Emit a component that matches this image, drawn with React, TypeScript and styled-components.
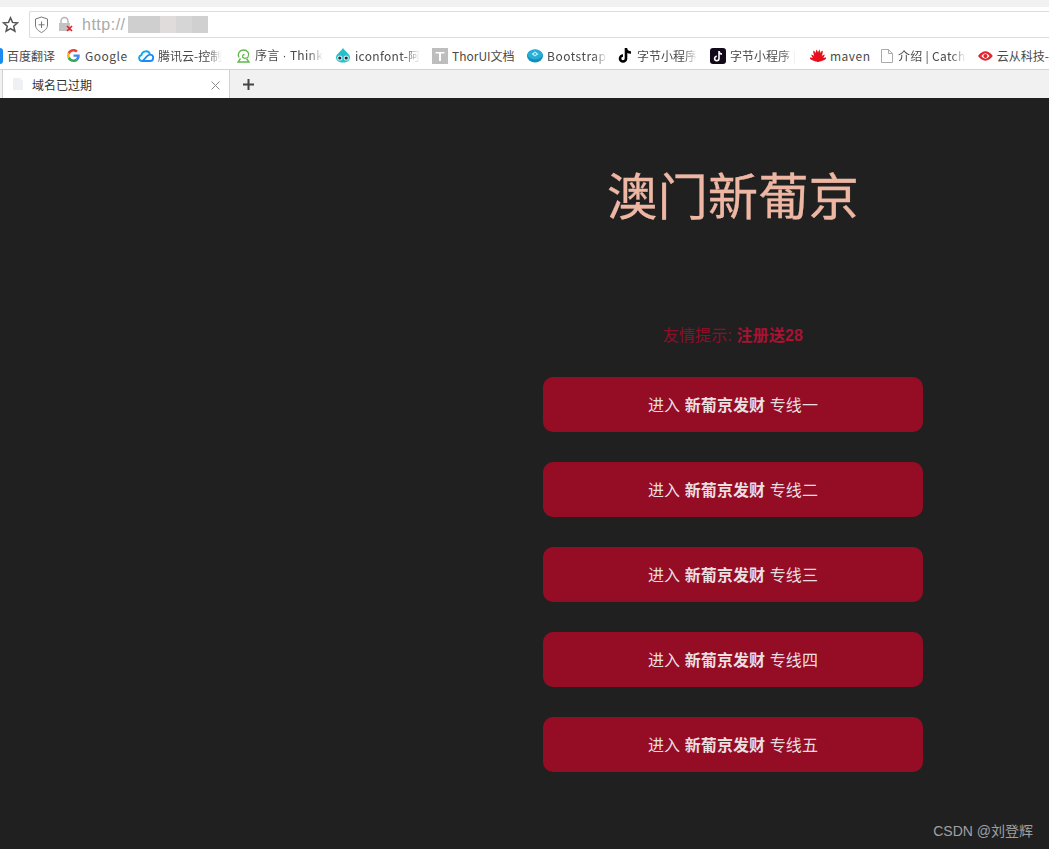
import styled, { createGlobalStyle } from 'styled-components';

const FONT = '"Liberation Sans", "Noto Sans CJK SC", sans-serif';

const GlobalStyle = createGlobalStyle`
  html, body {
    margin: 0;
    padding: 0;
    background: #202021;
  }
  body {
    font-family: ${FONT};
  }
`;

const Screen = styled.div`
  width: 1049px;
  height: 849px;
  overflow: hidden;
  display: flex;
  flex-direction: column;
  position: relative;
`;

/* browser chrome */
const TopStrip = styled.div`
  height: 7px;
  background: #f1f1f1;
`;

const Toolbar = styled.div`
  height: 31px;
  background: #fff;
  display: flex;
  align-items: flex-end;
  padding-left: 2px;
  box-sizing: border-box;
`;

const StarIcon = styled.svg`
  flex: none;
  margin: 0 10px 5px 0;
`;

const AddressBar = styled.div`
  flex: 1;
  height: 27px;
  border: 1px solid #dcdcdc;
  border-right: none;
  border-radius: 2px 0 0 2px;
  display: flex;
  align-items: center;
  padding-left: 4px;
  box-sizing: border-box;
`;

const LockIcon = styled.svg`
  margin-left: 8px;
`;

const UrlText = styled.span`
  font-size: 16px;
  color: #aaa;
  margin-left: 7px;
  letter-spacing: 0.5px;
`;

const Mask = styled.div`
  display: flex;
  height: 17px;
  margin-left: 2px;
`;

const MaskCell = styled.div<{ $w: number; $c: string }>`
  width: ${p => p.$w}px;
  background: ${p => p.$c};
`;

const Bookmarks = styled.div`
  height: 32px;
  background: #fff;
  border-bottom: 1px solid #d2d2d2;
  padding-top: 4px;
  box-sizing: border-box;
  display: flex;
  align-items: center;
  overflow: hidden;
`;

const Bookmark = styled.div<{ $w: number; $flush?: boolean }>`
  width: ${p => p.$w}px;
  flex: none;
  display: flex;
  align-items: center;
  gap: 4px;
  padding-left: ${p => (p.$flush ? 0 : 2)}px;
  box-sizing: border-box;
`;

const BookmarkLabel = styled.span<{ $fade?: boolean; $sp?: number }>`
  font-family: "Noto Sans CJK SC", "Liberation Sans", sans-serif;
  font-size: 12px;
  line-height: 16px;
  color: #4a4a4a;
  white-space: nowrap;
  letter-spacing: ${p => p.$sp ?? 0}px;
  ${p => p.$fade && `
    mask-image: linear-gradient(to right, #000 78%, transparent);
  `}
`;

const NarrowDot = styled.span`
  font-family: "Liberation Sans", sans-serif;
`;

const BlueEdge = styled.div`
  width: 3px;
  height: 16px;
  background: #1a8cf0;
  border-radius: 0 3px 3px 0;
  flex: none;
`;

const TabStrip = styled.div`
  height: 28px;
  background: #f1f1f1;
  display: flex;
  align-items: flex-end;
  padding-left: 2px;
  box-sizing: border-box;
`;

const Tab = styled.div`
  width: 228px;
  height: 28px;
  background: #fff;
  border: 1px solid #d2d2d2;
  border-top: none;
  border-bottom: none;
  display: flex;
  align-items: center;
  padding-left: 10px;
  gap: 9px;
  box-sizing: border-box;
`;

const TabTitle = styled.span`
  flex: 1;
  font-family: "Noto Sans CJK SC", sans-serif;
  font-size: 12px;
  color: #333;
`;

const TabClose = styled.svg`
  margin-right: 9px;
  margin-top: 2px;
`;

const NewTab = styled.svg`
  margin: 0 0 8px 13px;
`;

/* page */
const Page = styled.main`
  flex: 1;
  background: #202021;
  display: flex;
  justify-content: flex-end;
  padding-right: 126px;
`;

const Column = styled.div`
  width: 380px;
  display: flex;
  flex-direction: column;
  align-items: center;
`;

const Title = styled.h1`
  margin: 69px 0 0;
  font-size: 50.4px;
  line-height: 62px;
  font-weight: 400;
  color: #edb7a3;
  -webkit-text-stroke: 0.3px #edb7a3;
`;

const Tip = styled.p`
  margin: 96px 0 0;
  font-size: 16px;
  line-height: 22px;
  letter-spacing: 0.15px;
  color: #8e0f28;
  b {
    color: #a91232;
  }
`;

const Lines = styled.div`
  margin-top: 30px;
  width: 100%;
  display: flex;
  flex-direction: column;
  gap: 30px;
`;

const LineButton = styled.a`
  height: 55px;
  padding-bottom: 2px;
  box-sizing: border-box;
  border-radius: 10px;
  background: #950c25;
  color: #e9dfe0;
  font-size: 16px;
  letter-spacing: 0.1px;
  display: flex;
  align-items: center;
  justify-content: center;
  white-space: pre;
`;

const Watermark = styled.div`
  position: absolute;
  right: 16px;
  bottom: 9px;
  font-size: 14px;
  color: #a0a0a0;
`;

const lines = ['一', '二', '三', '四', '五'];
const petals = [-70, -46, -24, -8, 8, 24, 46, 70];

const App = () => {
  return (
    <Screen>
      <GlobalStyle />
      <TopStrip />
      <Toolbar>
        <StarIcon width="17" height="17" viewBox="0 0 17 17" fill="none" stroke="#555" strokeWidth="1.5">
          <path d="M8.5 1.800l2 4.600 5 .5-3.800 3.300 1.200 4.900-4.400-2.600-4.400 2.600 1.200-4.900L1.500 6.900l5-.5z" />
        </StarIcon>
        <AddressBar>
          <svg width="15" height="18" viewBox="0 0 15 18" fill="none" stroke="#777" strokeWidth="1">
            <path d="M7.500 1l6 2v6c0 3.500-3 6-6 7.500-3-1.500-6-4-6-7.500V3z" />
            <path d="M7.500 5.500v6.500M4.500 8.800h6" />
          </svg>
          <LockIcon width="18" height="17" viewBox="0 0 18 17">
            <path d="M4 7V5a3.500 3.500 0 0 1 7 0v2" fill="none" stroke="#b5b5b5" strokeWidth="1.500" />
            <rect x="2" y="7" width="11" height="8" fill="#c2c2c2" />
            <path d="M10 10l5 5M15 10l-5 5" stroke="#e0202a" strokeWidth="1.600" />
          </LockIcon>
          <UrlText>http://</UrlText>
          <Mask>
            <MaskCell $w={32} $c="#cfcfcf" />
            <MaskCell $w={16} $c="#e0dcdc" />
            <MaskCell $w={16} $c="#d6d6d6" />
            <MaskCell $w={16} $c="#d0d0d0" />
          </Mask>
        </AddressBar>
      </Toolbar>
      <Bookmarks>
        <Bookmark $w={65} $flush>
          <BlueEdge />
          <BookmarkLabel>百度翻译</BookmarkLabel>
        </Bookmark>
        <Bookmark $w={71}>
          <svg width="13" height="13" viewBox="0 0 48 48">
            <path fill="#EA4335" d="M24 9.500c3.500 0 6.700 1.200 9.200 3.600l6.900-6.900C35.900 2.400 30.500 0 24 0 14.600 0 6.500 5.400 2.600 13.200l8 6.200C12.500 13.600 17.800 9.500 24 9.500z" />
            <path fill="#4285F4" d="M47 24.500c0-1.600-.1-3.100-.4-4.500H24v9h13c-.6 3-2.200 5.500-4.800 7.200l7.700 6C44.400 38 47 31.800 47 24.500z" />
            <path fill="#FBBC05" d="M10.600 28.600c-.5-1.500-.8-3-.8-4.600s.3-3.100.8-4.600l-8-6.200C.9 16.500 0 20.100 0 24s.9 7.500 2.600 10.800z" />
            <path fill="#34A853" d="M24 48c6.500 0 11.900-2.100 15.900-5.800l-7.700-6c-2.100 1.400-4.900 2.300-8.200 2.300-6.200 0-11.500-4.100-13.400-9.900l-8 6.200C6.500 42.600 14.600 48 24 48z" />
          </svg>
          <BookmarkLabel $sp={0.5} style={{ marginLeft: 1 }}>Google</BookmarkLabel>
        </Bookmark>
        <Bookmark $w={98}>
          <svg width="16" height="13" viewBox="0 0 16 13" fill="none" strokeWidth="1.800">
            <path d="M4 12a3 3 0 0 1-.6-5.900A4.500 4.500 0 0 1 12 5" stroke="#12a5f0" />
            <path d="M4 12h8a3.200 3.200 0 0 0 0-6.400c-2 0-3 1.500-4 2.700L4.500 12" stroke="#1a8cf5" />
          </svg>
          <BookmarkLabel $fade>腾讯云-控制</BookmarkLabel>
        </Bookmark>
        <Bookmark $w={99}>
          <svg width="15" height="14" viewBox="0 0 15 14" fill="none" stroke="#5fb84a" strokeWidth="1.300">
            <path d="M3 8.500C1 5 3.500 1 7.500 1s6.500 3.500 4.500 7c-1 1.500-4 1.500-5 .5s-.5-3 1.500-3" />
            <path d="M4.500 9.500L2 13h11l-2.500-3.500" />
          </svg>
          <BookmarkLabel $fade $sp={0.3}>序言 <NarrowDot>·</NarrowDot> Think</BookmarkLabel>
        </Bookmark>
        <Bookmark $w={97}>
          <svg width="16" height="16" viewBox="0 0 16 16">
            <path d="M8 0c1 2 3 3 4 4.500 1.500 1.500 3 3 3 5 0 3-3 5-7 5s-7-2-7-5c0-2 1.500-3.500 3-5C5 3 7 2 8 0z" fill="#22c1cc" />
            <circle cx="4.800" cy="10" r="2.600" fill="#dfeef0" />
            <circle cx="11.200" cy="10" r="2.600" fill="#dfeef0" />
            <circle cx="4.800" cy="10" r="1.600" fill="#1d3340" />
            <circle cx="11.200" cy="10" r="1.600" fill="#1d3340" />
          </svg>
          <BookmarkLabel $fade $sp={0.3}>iconfont-阿</BookmarkLabel>
        </Bookmark>
        <Bookmark $w={95}>
          <svg width="16" height="16" viewBox="0 0 16 16">
            <rect width="16" height="16" fill="#bdbdbd" />
            <path d="M3.500 4h9v1.500L9 5.500V13H7V5.500l-3.500 0z" fill="#fff" />
          </svg>
          <BookmarkLabel>ThorUI文档</BookmarkLabel>
        </Bookmark>
        <Bookmark $w={90}>
          <svg width="16" height="14" viewBox="0 0 16 14">
            <ellipse cx="8" cy="7" rx="8" ry="6.500" fill="#0f8fbd" />
            <ellipse cx="8" cy="5.500" rx="7.500" ry="5" fill="#27aed8" />
            <path d="M8 2.500l3.500 2.500L8 7.500 4.500 5z" fill="#bfe9f5" />
            <circle cx="8" cy="5" r="1" fill="#27aed8" />
          </svg>
          <BookmarkLabel $fade $sp={0.5}>Bootstrap</BookmarkLabel>
        </Bookmark>
        <Bookmark $w={93}>
          <svg width="16" height="17" viewBox="0 0 16 17" fill="none" stroke="#000" strokeWidth="2.600">
            <path d="M9 1v10.500a3 3 0 1 1-3-3M9 2c.5 2.500 2.500 3.500 5 3.500" />
          </svg>
          <BookmarkLabel $fade>字节小程序</BookmarkLabel>
        </Bookmark>
        <Bookmark $w={100}>
          <svg width="16" height="16" viewBox="0 0 16 16" fill="none">
            <rect width="16" height="16" rx="3" fill="#12091a" />
            <path d="M9 3v7.500a2.200 2.200 0 1 1-2.200-2.200M9 3.500c.3 1.700 1.500 2.500 3 2.500" stroke="#fff" strokeWidth="1.600" />
          </svg>
          <BookmarkLabel $fade>字节小程序 |</BookmarkLabel>
        </Bookmark>
        <Bookmark $w={71}>
          <svg width="16" height="13" viewBox="0 0 16 13" fill="#e60f1e">
            {petals.map(a => (
              <path key={a} d="M8 11.500C6.200 8 6.200 3.500 8 .5c1.800 3 1.800 7.500 0 11z" transform={`rotate(${a} 8 12) ${Math.abs(a) > 40 ? 'translate(0 2)' : ''}`} />
            ))}
          </svg>
          <BookmarkLabel $sp={0.5}>maven</BookmarkLabel>
        </Bookmark>
        <Bookmark $w={97}>
          <svg width="12" height="14" viewBox="0 0 12 14" fill="none" stroke="#aaa">
            <path d="M.5.500h7l4 4v9H.5zM7.500.500v4h4" />
          </svg>
          <BookmarkLabel $fade $sp={0.3} style={{ marginLeft: 1 }}>介绍 | Catch</BookmarkLabel>
        </Bookmark>
        <Bookmark $w={73}>
          <svg width="16" height="14" viewBox="0 0 16 14">
            <path d="M0 7Q8-3 16 7 8 17 0 7z" fill="#e0252d" />
            <path d="M3.500 7Q8 1 12.500 7 8 13 3.500 7z" fill="#fff" />
            <circle cx="8" cy="7" r="2.200" fill="#e0252d" />
          </svg>
          <BookmarkLabel>云从科技-</BookmarkLabel>
        </Bookmark>
      </Bookmarks>
      <TabStrip>
        <Tab>
          <svg width="10" height="12" viewBox="0 0 10 12">
            <path d="M0 0h7l3 3v9H0z" fill="#eef0f4" />
          </svg>
          <TabTitle>域名已过期</TabTitle>
          <TabClose width="9" height="9" viewBox="0 0 9 9" stroke="#888" strokeWidth="1">
            <path d="M.5.500l8 8M8.500.500l-8 8" />
          </TabClose>
        </Tab>
        <NewTab width="11" height="11" viewBox="0 0 11 11" stroke="#444" strokeWidth="2">
          <path d="M5.500 0v11M0 5.500h11" />
        </NewTab>
      </TabStrip>
      <Page>
        <Column>
          <Title>澳门新葡京</Title>
          <Tip>友情提示: <b>注册送28</b></Tip>
          <Lines>
            {lines.map(n => (
              <LineButton key={n}>进入 <b>新葡京发财</b> 专线{n}</LineButton>
            ))}
          </Lines>
        </Column>
      </Page>
      <Watermark>CSDN @刘登辉</Watermark>
    </Screen>
  );
};

export default App;
